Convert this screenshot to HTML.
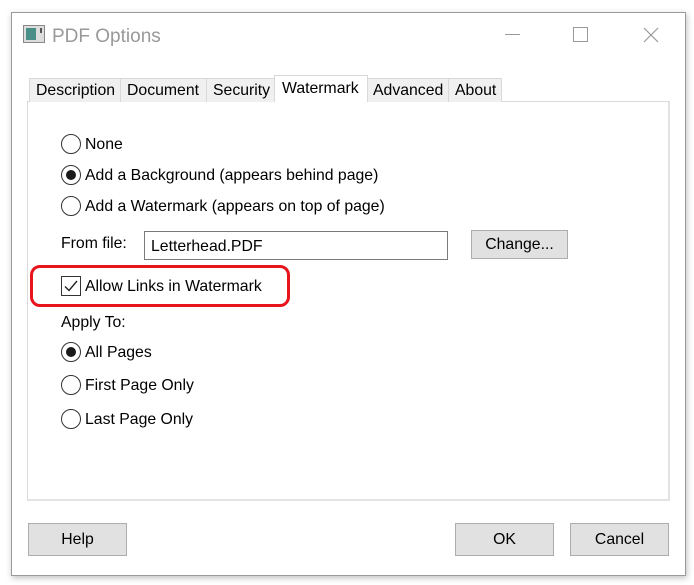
<!DOCTYPE html>
<html><head><meta charset="utf-8"><style>
*{margin:0;padding:0;box-sizing:border-box}
body{width:694px;height:585px;background:#fff;position:relative;overflow:hidden;font-family:"Liberation Sans",sans-serif;font-size:15.8px;color:#000}
.a{position:absolute;white-space:nowrap}
.win{left:11px;top:12px;width:675px;height:564px;border:1px solid #9a9a9a;background:#fff;box-shadow:1px 2px 6px rgba(0,0,0,.25)}
.tab{position:absolute;top:78px;height:24px;background:#f0f0f0;border:1px solid #d9d9d9;border-bottom:none;line-height:24px;padding-left:6px}
.panel{left:27px;top:101px;width:643px;height:400px;border:1px solid #d9d9d9;border-right:2px solid #e3e3e3;border-bottom:2px solid #e3e3e3;background:#fff}
.radio{position:absolute;width:20px;height:20px;border:1px solid #333;border-radius:50%;background:#fff}
.radio.on::after{content:"";position:absolute;left:4px;top:4px;width:10px;height:10px;border-radius:50%;background:#1a1a1a}
.btn{position:absolute;background:#e1e1e1;border:1px solid #adadad;text-align:center;line-height:32px}
</style></head><body>
<div class="a win"></div>
<div class="a" style="left:23px;top:25px;width:22px;height:18px;border:1px solid #888;background:#ddd"><div style="position:absolute;left:2px;top:2px;width:10px;height:12px;background:#4a8f87"></div><div style="position:absolute;left:16px;top:2px;width:2px;height:5px;background:#555"></div></div>
<div class="a" style="left:52px;top:26px;font-size:19px;color:#999">PDF Options</div>
<div class="a" style="left:505px;top:34px;width:15px;height:1px;background:#999"></div>
<div class="a" style="left:573px;top:27px;width:15px;height:15px;border:1px solid #999"></div>
<svg class="a" style="left:643px;top:27px" width="16" height="16"><path d="M1 1L15 15M15 1L1 15" stroke="#999" stroke-width="1.2"/></svg>

<div class="a panel"></div>
<div class="tab" style="left:29px;width:92px">Description</div>
<div class="tab" style="left:120px;width:87px">Document</div>
<div class="tab" style="left:206px;width:69px">Security</div>
<div class="tab" style="left:274px;top:75px;height:27px;width:94px;background:#fff;line-height:26px;padding-left:7px">Watermark</div>
<div class="tab" style="left:367px;width:82px;padding-left:5px">Advanced</div>
<div class="tab" style="left:448px;width:54px">About</div>

<div class="radio" style="left:61px;top:134px"></div><div class="a" style="left:85px;top:136px">None</div>
<div class="radio on" style="left:61px;top:165px"></div><div class="a" style="left:85px;top:167px">Add a Background (appears behind page)</div>
<div class="radio" style="left:61px;top:196px"></div><div class="a" style="left:85px;top:198px">Add a Watermark (appears on top of page)</div>
<div class="a" style="left:61px;top:235px">From file:</div>
<div class="a" style="left:144px;top:231px;width:304px;height:29px;border:1px solid #7a7a7a;padding:6px 6px">Letterhead.PDF</div>
<div class="btn" style="left:471px;top:230px;width:97px;height:29px;line-height:28px">Change...</div>
<div class="a" style="left:30px;top:265px;width:260px;height:42px;border:3px solid #e8141b;border-radius:10px"></div>
<div class="a" style="left:61px;top:276px;width:20px;height:20px;border:1px solid #333"></div>
<svg class="a" style="left:61px;top:276px" width="20" height="20"><path d="M4 10.5L8 14.5L16 5" stroke="#222" stroke-width="1.4" fill="none"/></svg>
<div class="a" style="left:85px;top:278px">Allow Links in Watermark</div>
<div class="a" style="left:61px;top:314px">Apply To:</div>
<div class="radio on" style="left:61px;top:342px"></div><div class="a" style="left:85px;top:344px">All Pages</div>
<div class="radio" style="left:61px;top:375px"></div><div class="a" style="left:85px;top:377px">First Page Only</div>
<div class="radio" style="left:61px;top:409px"></div><div class="a" style="left:85px;top:411px">Last Page Only</div>

<div class="btn" style="left:28px;top:523px;width:99px;height:33px">Help</div>
<div class="btn" style="left:455px;top:523px;width:99px;height:33px">OK</div>
<div class="btn" style="left:570px;top:523px;width:99px;height:33px">Cancel</div>
</body></html>
